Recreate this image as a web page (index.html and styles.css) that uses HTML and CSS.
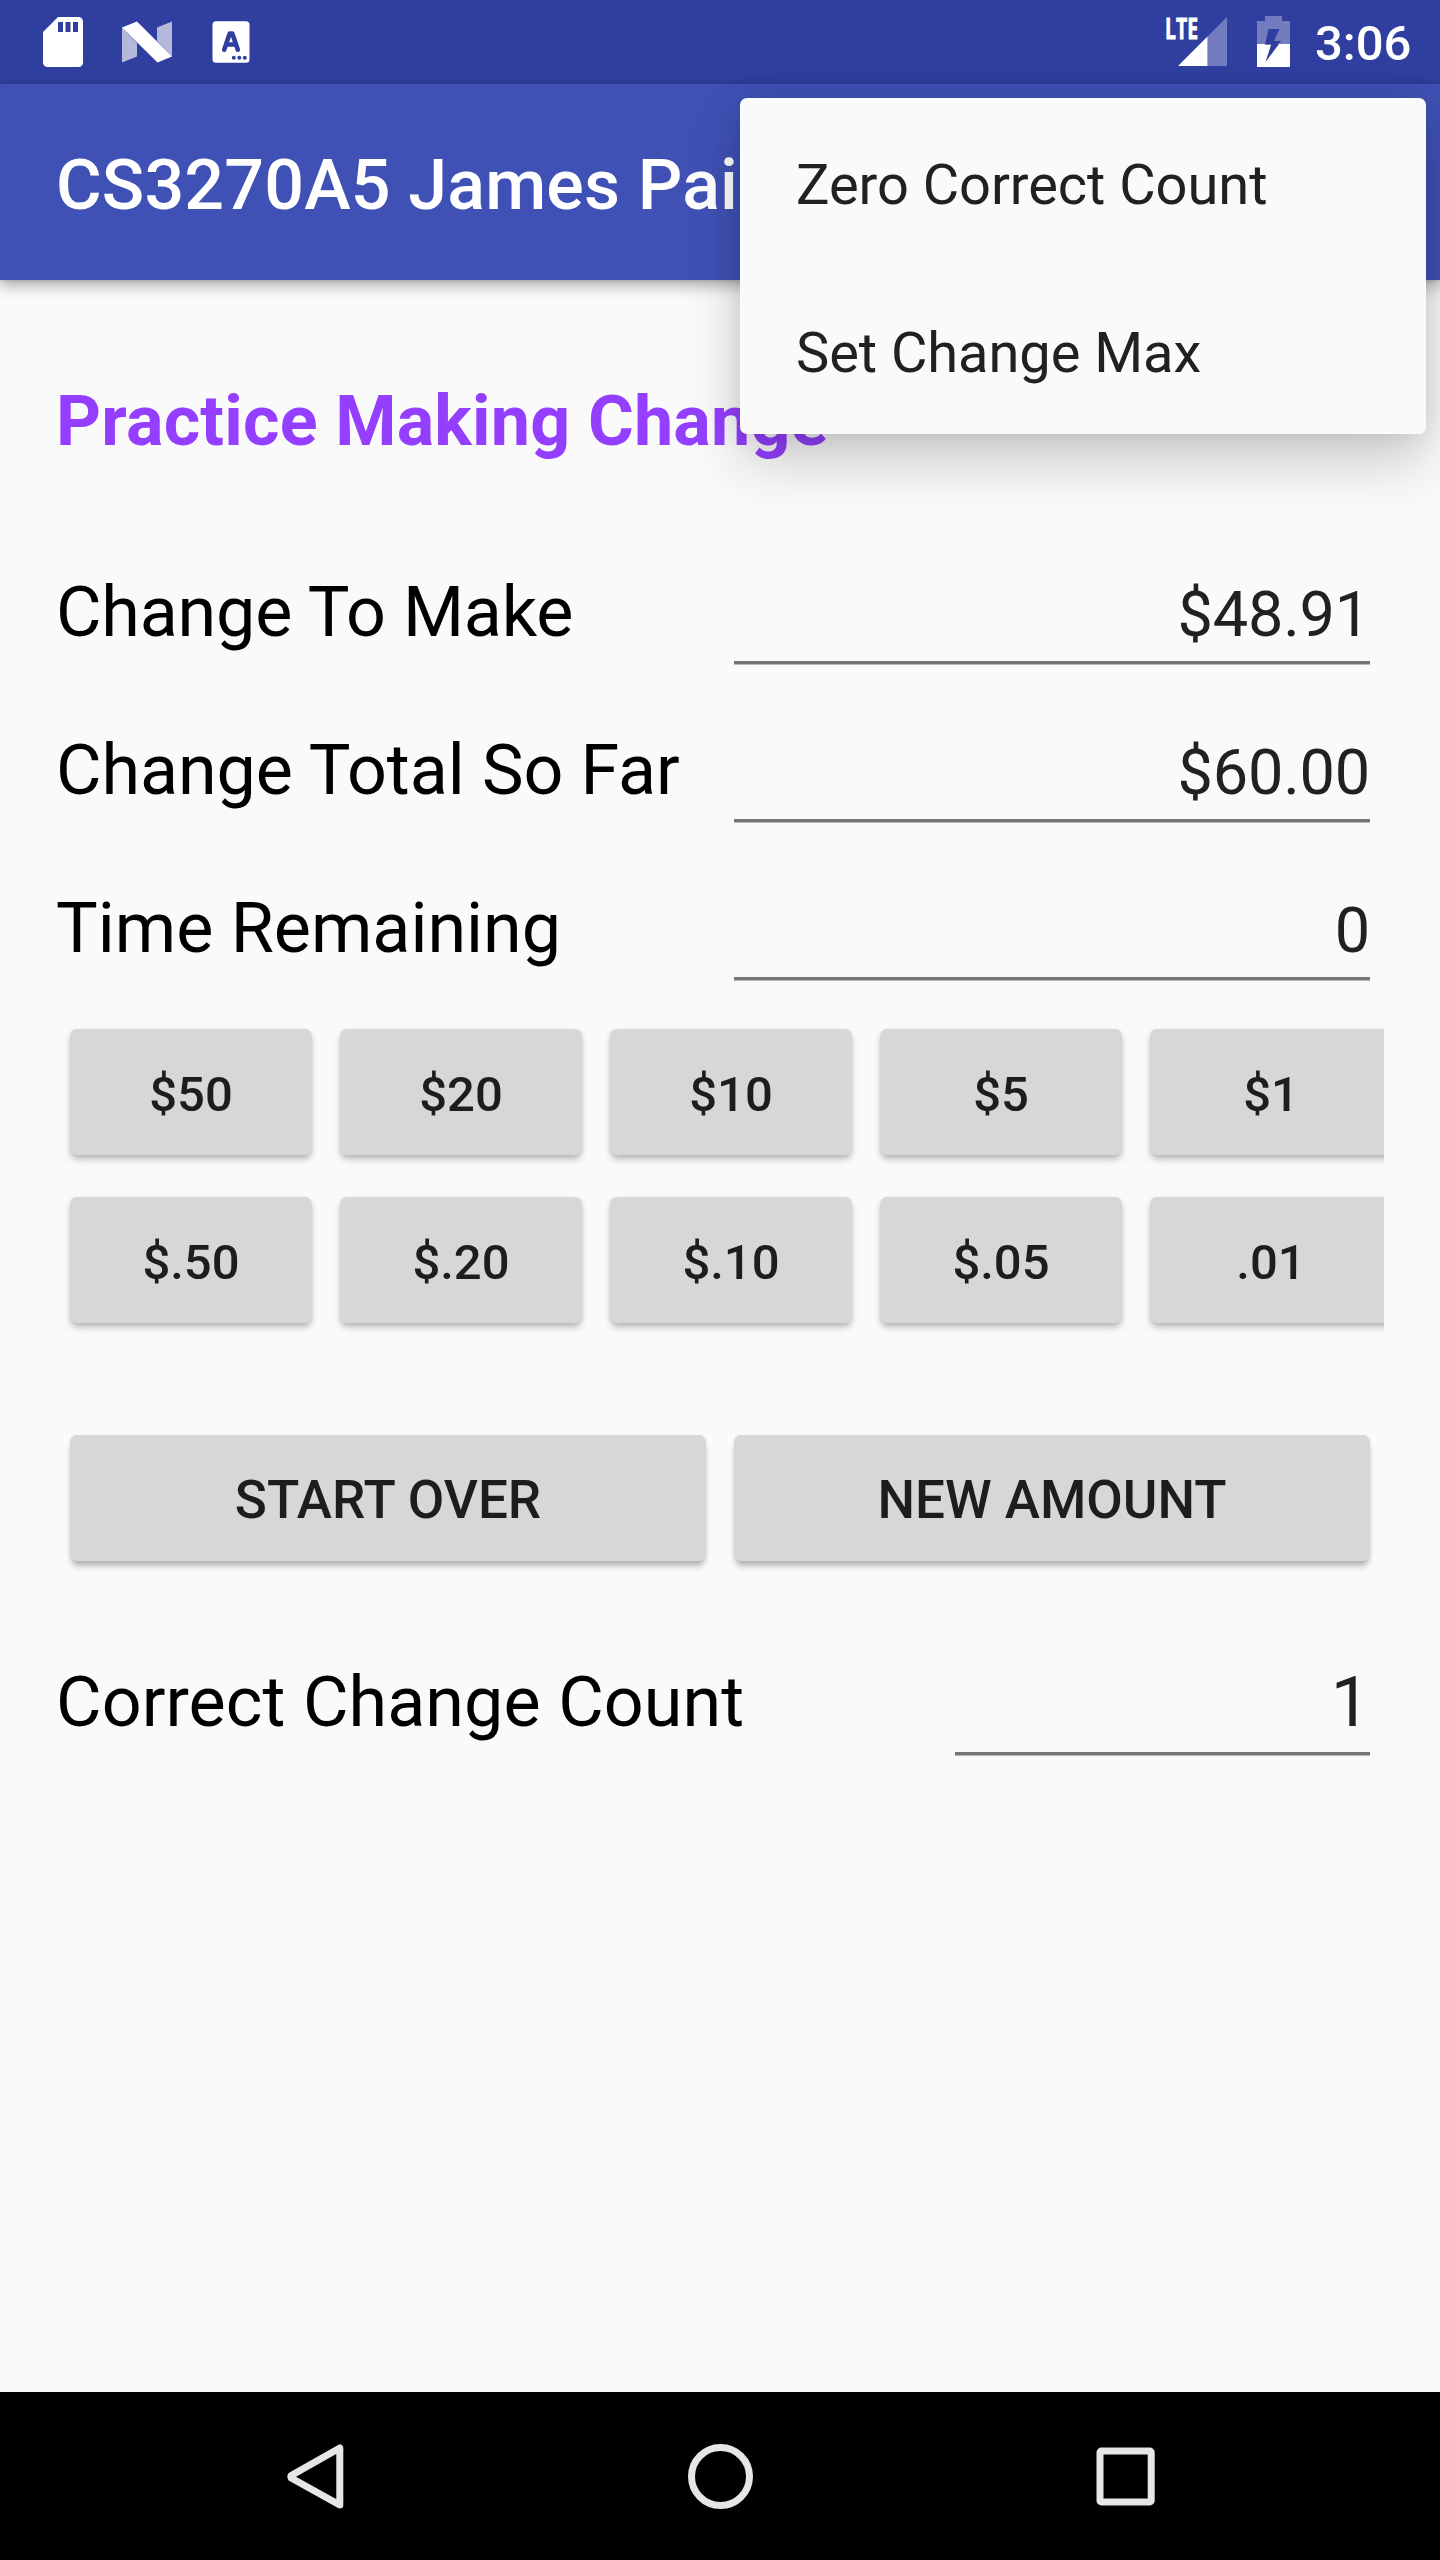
FILE: index.html
```html
<!DOCTYPE html>
<html lang="en">
<head>
<meta charset="utf-8">
<title>Practice Making Change</title>
<link rel="stylesheet" href="styles.css">
</head>
<body>
<div class="screen">
  <header class="status-bar">
    <svg class="status-icons" width="250" height="84" viewBox="0 0 250 84">
      <path fill="#fff" fill-rule="evenodd" d="M58 17H78.500a4.500 4.500 0 0 1 4.500 4.500V62.500a4.500 4.500 0 0 1-4.500 4.500H47.500a4.500 4.500 0 0 1-4.500-4.500V32ZM58 22V32h5V22ZM65.500 22V32h5V22ZM73 22V32h5V22Z"/>
      <path fill="#fff" fill-opacity=".64" d="M122 27.500 137 43V56.500L122 62.500ZM157 27.500 172 21.500V56.500L157 41Z"/>
      <path fill="#fff" d="M122 27.500 137 21.500 172 56.500 157.500 62.500Z"/>
      <rect x="212.500" y="21.300" width="37" height="41.400" rx="3.500" fill="#fff"/>
      <path fill="none" stroke="#303f9f" stroke-width="4.600" stroke-linecap="round" stroke-linejoin="round" d="M224.200 49.700 229.700 33.500H232.300L237.800 49.700M226.500 44.500H235.500"/>
      <g fill="#303f9f"><circle cx="233.800" cy="57.800" r="2"/><circle cx="239.300" cy="57.800" r="2"/><circle cx="244.800" cy="57.800" r="2"/></g>
    </svg>
    <div class="status-right">
      <svg width="130" height="84" viewBox="1164 0 130 84">
        <text class="lte" x="1165" y="39" textLength="33" lengthAdjust="spacingAndGlyphs">LTE</text>
        <path fill="#fff" fill-opacity=".32" d="M1207.500 36.500 1227 17V66H1207.500Z"/>
        <path fill="#fff" d="M1178 66 1207.500 36.500V66Z"/>
        <path fill="#fff" fill-opacity=".32" fill-rule="evenodd" d="M1257 21H1265V16H1282V21H1290V44H1277.800L1281.500 41H1274L1279.500 29H1268.500L1265 45H1271L1270.900 44H1257Z"/>
        <path fill="#fff" fill-rule="evenodd" d="M1257 44H1265.200L1265 45H1271L1265.500 62 1279 44H1290V67H1257Z"/>
      </svg>
      <span class="clock">3:06</span>
    </div>
  </header>

  <div class="app-bar"><h1 class="app-title">CS3270A5 James Pai</h1></div>

  <main class="content">
    <h2 class="heading">Practice Making Change</h2>
    <div class="row"><span class="label label-tight">Change To Make</span><span class="field">$48.91</span></div>
    <div class="row"><span class="label label-snug">Change Total So Far</span><span class="field">$60.00</span></div>
    <div class="row"><span class="label">Time Remaining</span><span class="field">0</span></div>

    <div class="coins">
      <button class="btn">$50</button><button class="btn">$20</button><button class="btn">$10</button><button class="btn">$5</button><button class="btn">$1</button>
      <button class="btn">$.50</button><button class="btn">$.20</button><button class="btn">$.10</button><button class="btn">$.05</button><button class="btn">.01</button>
    </div>

    <div class="actions">
      <button class="btn btn-wide">START OVER</button>
      <button class="btn btn-wide">NEW AMOUNT</button>
    </div>

    <div class="row row-count"><span class="label">Correct Change Count</span><span class="field field-count">1</span></div>
  </main>

  <nav class="nav-bar">
    <svg width="1440" height="168" viewBox="0 0 1440 168" fill="none" stroke="#e6e6e6" stroke-width="7">
      <path stroke-linejoin="round" d="M339.800 56V113L291.200 86Q290.500 84.500 291.200 83.500Z"/>
      <circle cx="720.500" cy="84.500" r="29"/>
      <rect x="1100" y="59" width="51.200" height="51" rx="1.500"/>
    </svg>
  </nav>

  <div class="menu">
    <div class="menu-item">Zero Correct Count</div>
    <div class="menu-item">Set Change Max</div>
  </div>
</div>
</body>
</html>
```
FILE: styles.css
```css
* { box-sizing: border-box; }

body { margin: 0; }

.screen {
  position: relative;
  display: flex;
  flex-direction: column;
  width: 1440px;
  height: 2560px;
  overflow: hidden;
  background: #fafafa;
  color: #000;
  font-family: Roboto, sans-serif;
}

.status-bar {
  display: flex;
  justify-content: space-between;
  height: 84px;
  background: #303f9f;
}

.status-right { display: flex; padding-right: 28px; }

.lte {
  fill: #fff;
  stroke: #fff;
  stroke-width: .8px;
  font: 700 29px "Open Sans", sans-serif;
}

.clock {
  width: 118px;
  padding-top: 4px;
  padding-left: 21px;
  color: #fff;
  font-size: 49px;
  font-weight: 500;
  line-height: 80px;
}

.app-bar {
  position: relative;
  height: 196px;
  padding: 6px 56px 0;
  background: #3f51b5;
  box-shadow: 0 6px 14px rgba(0, 0, 0, .3), 0 1px 4px rgba(0, 0, 0, .12);
}

.app-title {
  margin: 0;
  color: #fff;
  font-size: 70px;
  font-weight: 500;
  letter-spacing: .16px;
  line-height: 190px;
  white-space: nowrap;
}

.content { flex: 1; padding: 100px 56px 0; }

.heading {
  margin: 0 0 44px;
  color: #943fff;
  font-size: 70px;
  font-weight: 700;
  letter-spacing: .2px;
  line-height: 82px;
}

.row {
  display: flex;
  align-items: flex-end;
  justify-content: space-between;
  height: 158px;
  padding-right: 14px;
}

.label {
  margin-bottom: 11px;
  font-size: 70px;
  line-height: 82px;
  white-space: nowrap;
}

.label-tight { letter-spacing: -.2px; }
.label-snug { letter-spacing: -.08px; }

.field {
  width: 636px;
  padding-bottom: 9.5px;
  border-bottom: 3px solid #757575;
  box-shadow: 0 1px #b8b8b8;
  color: #212121;
  font-size: 63px;
  letter-spacing: -.2px;
  line-height: 74px;
  text-align: right;
}

.coins {
  display: grid;
  grid-template-columns: repeat(5, 242px);
  gap: 42px 28px;
  margin-top: 49px;
  padding-left: 14px;
  overflow-x: clip;
}

.btn {
  height: 126px;
  padding: 5px 0 0;
  border: 0;
  border-radius: 7px;
  background: #d6d8d7;
  box-shadow: 0 5px 7px -1px rgba(0, 0, 0, .26), 0 1px 4px rgba(0, 0, 0, .07);
  color: #1d1d1d;
  font: 500 49px/1 Roboto, sans-serif;
}

.actions {
  display: grid;
  grid-template-columns: 636px 636px;
  gap: 28px;
  margin-top: 112px;
  padding-left: 14px;
}

.btn-wide {
  box-shadow: 0 7px 6px -2px rgba(0, 0, 0, .26), 0 1px 4px rgba(0, 0, 0, .09);
  font-size: 53px;
}

.row-count { height: 194px; }
.row-count .label { margin-bottom: 12px; letter-spacing: .08px; }

.field-count {
  width: 415px;
  padding-bottom: 9px;
  font-size: 70px;
  line-height: 82px;
}

.nav-bar { height: 168px; background: #000; }
.nav-bar svg { display: block; }

.menu {
  position: absolute;
  top: 98px;
  left: 740px;
  width: 686px;
  border-radius: 7px;
  background: #fafafa;
  box-shadow: 0 28px 56px rgba(0, 0, 0, .19), 0 0 28px rgba(0, 0, 0, .1);
}

.menu-item {
  height: 168px;
  padding: 6px 56px 0;
  color: #212121;
  font-size: 56px;
  letter-spacing: -.06px;
  line-height: 162px;
}
```
